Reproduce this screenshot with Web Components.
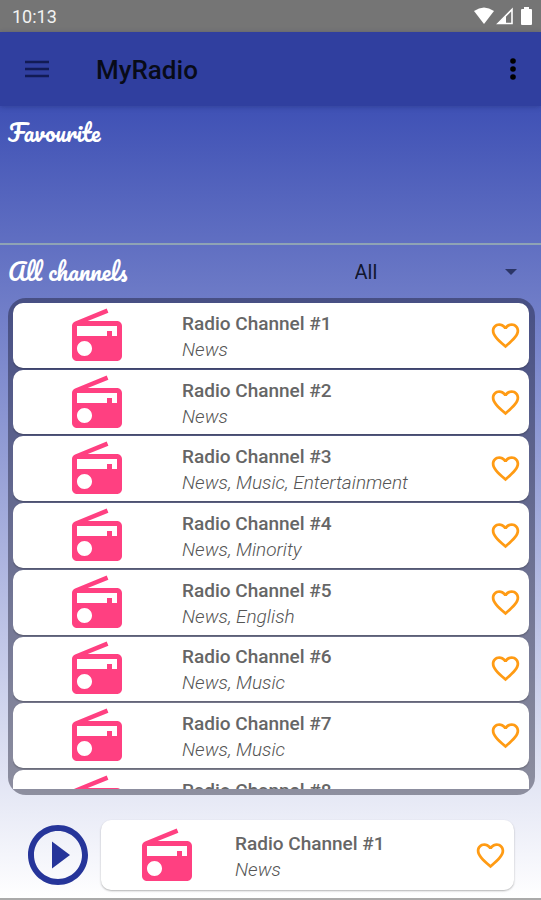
<!DOCTYPE html>
<html lang="en">
<head>
<meta charset="utf-8">
<meta name="viewport" content="width=device-width, initial-scale=1">
<title>MyRadio</title>
<style>
  html, body { margin: 0; height: 100%; }
  body { font-family: Roboto, "Liberation Sans", sans-serif; }
</style>
</head>
<body>
<radio-app></radio-app>
<script>
const define = (name, markup, setup) => {
  const template = document.createElement("template");
  template.innerHTML = markup;
  customElements.define(name, class extends HTMLElement {
    constructor() {
      super();
      this.attachShadow({ mode: "open" }).append(template.content.cloneNode(true));
    }
    connectedCallback() { if (setup) setup(this, this.shadowRoot); }
  });
};

define("status-bar", `
  <style>
    :host { display: flex; align-items: center; justify-content: space-between;
      height: 32px; padding: 0 9px 0 12px; box-sizing: border-box;
      background: #757575; color: #f2f2f2; font-size: 18px; line-height: 32px; }
    time { padding-top: 2px; }
    .icons { display: flex; align-items: center; gap: 2px; }
    svg { display: block; }
    .battery { margin-left: 6px; }
  </style>
  <time>10:13</time>
  <span class="icons">
    <svg width="20" height="18" viewBox="0 0 20 18" fill="#fff"><path d="M0 4Q10-3 20 4L10 17z"/></svg>
    <svg width="17" height="18" viewBox="0 0 17 18"><path d="M2 16.500 16 2.500V16.500z" fill="none" stroke="#fff" stroke-width="1.600"/><path d="M2 17 10 9V17z" fill="#fff"/><path d="M10 10.500 13 7.500V14H10z" fill="#757575"/></svg>
    <svg class="battery" width="11" height="18" viewBox="0 0 11 18" fill="#fff"><path d="M3 0h5v2h2q1 0 1 1v14q0 1-1 1H1q-1 0-1-1V3q0-1 1-1h2z"/></svg>
  </span>`);

define("app-header", `
  <style>
    :host { display: flex; align-items: center; height: 74px; padding: 0 16px 0 24px;
      box-sizing: border-box; background: #303f9f; color: #080b18;
      box-shadow: 0 1px 5px rgba(20,30,90,.3); position: relative; }
    h1 { flex: 1; margin: 0 0 0 46px; padding-top: 2px; font-size: 26px; line-height: 32px; font-weight: 500; }
    button { border: 0; padding: 0; background: none; color: inherit; }
    svg { display: block; }
  </style>
  <button aria-label="Open menu"><svg width="26" height="20" viewBox="0 0 26 20" stroke="#121b55" stroke-width="2.400"><path d="M1 3h24M1 10h24M1 17h24"/></svg></button>
  <h1><slot></slot></h1>
  <button aria-label="More options"><svg width="24" height="24" viewBox="0 0 24 24"><circle cx="12" cy="4" r="2.800"/><circle cx="12" cy="12" r="2.800"/><circle cx="12" cy="20" r="2.800"/></svg></button>`);

define("section-title", `
  <style>
    :host { display: block; color: #fff; }
    h2 { margin: 0; padding-bottom: 2px; font: 400 23px/32px Pacifico, "Liberation Serif", serif; white-space: nowrap; }
  </style>
  <h2><slot></slot></h2>`);

define("channel-filter", `
  <style>
    :host { display: block; position: relative; }
    select { appearance: none; width: 100%; border: 0; background: none; color: #11162e;
      font: 20px/32px Roboto, "Liberation Sans", sans-serif; padding: 0 40px 0 92px; height: 32px; }
    svg { position: absolute; right: 0; top: 13px; pointer-events: none; }
  </style>
  <select aria-label="Category"><option>All</option><option>News</option><option>Music</option></select>
  <svg width="12" height="6" viewBox="0 0 12 6" fill="#2b3566"><path d="M0 0h12L6 6z"/></svg>`);

define("channel-card", `
  <style>
    :host { display: grid; grid-template-columns: 167px 1fr 48px; column-gap: 2px; align-items: center;
      min-height: 64px; box-sizing: border-box; background: #fff; border-radius: 10px;
      box-shadow: 0 1px 2px rgba(0,0,0,.3); color: #666; overflow: hidden; }
    :host([compact]) { grid-template-columns: 132px 1fr 48px; height: 70px; }
    .text { padding-top: 3px; }
    .radio { display: block; justify-self: center; padding-top: 1px; }
    h3, p { margin: 0; min-height: 26px; line-height: 26px; font-size: 19px; white-space: nowrap; }
    h3 { font-weight: 500; }
    p { font-style: italic; font-weight: 300; color: #555; }
    button { border: 0; padding: 0; background: none; justify-self: center; }
    button svg { display: block; }
  </style>
  <svg class="radio" width="60" height="60" viewBox="0 0 24 24" fill="#ff4081"><path d="M3.240 6.150C2.510 6.430 2 7.170 2 8v12c0 1.100.890 2 2 2h16c1.110 0 2-.900 2-2V8c0-1.110-.890-2-2-2H8.300l8.260-3.340L15.880 1zM7 20c-1.660 0-3-1.340-3-3s1.340-3 3-3 3 1.340 3 3-1.340 3-3 3zm13-8h-2v-2h-2v2H4V8h16z"/></svg>
  <div class="text"><h3></h3><p></p></div>
  <button aria-label="Add to favourites"><svg width="33" height="33" viewBox="0 0 24 24" fill="#ff9b14"><path d="M16.500 3c-1.740 0-3.410.810-4.500 2.090C10.910 3.810 9.240 3 7.500 3 4.420 3 2 5.420 2 8.500c0 3.780 3.400 6.860 8.550 11.540L12 21.350l1.450-1.320C18.600 15.360 22 12.280 22 8.500 22 5.420 19.580 3 16.500 3zm-4.400 15.550-.100.100-.100-.100C7.140 14.240 4 11.390 4 8.500 4 6.500 5.500 5 7.500 5c1.540 0 3.040.990 3.570 2.360h1.870C13.460 5.990 14.960 5 16.500 5c2 0 3.500 1.500 3.500 3.500 0 2.890-3.140 5.740-7.900 10.050z"/></svg></button>`,
  (host, root) => {
    root.querySelector("h3").textContent = host.getAttribute("name");
    root.querySelector("p").textContent = host.getAttribute("genres");
  });

define("channel-list", `
  <style>
    :host { display: grid; flex: 1; min-height: 0; margin: 0 6px 0 8px; padding: 5px 6px 6px 5px;
      border-radius: 18px; background: rgba(18,20,40,.42); box-sizing: border-box; }
    .scroll { display: grid; grid-template-rows: repeat(7, minmax(64px, 1fr)) 19px;
      gap: 2px; min-height: 0; overflow: hidden; }
  </style>
  <div class="scroll"></div>`, (host, root) => {
  const genres = ["News", "News", "News, Music, Entertainment", "News, Minority", "News, English", "News, Music", "News, Music", ""];
  root.querySelector(".scroll").replaceChildren(...genres.map((genre, i) => {
    const card = document.createElement("channel-card");
    card.setAttribute("name", "Radio Channel #" + (i + 1));
    card.setAttribute("genres", genre);
    return card;
  }));
});

define("player-bar", `
  <style>
    :host { display: flex; align-items: center; gap: 7px; padding: 24px 27px 7px 22px;
      border-bottom: 2px solid #aaa; }
    button { border: 0; padding: 0; background: none; }
    svg { display: block; }
    channel-card { flex: 1; }
  </style>
  <button aria-label="Play"><svg width="72" height="72" viewBox="0 0 24 24" fill="#26359a"><path d="M10 16.500l6-4.500-6-4.500zM12 2C6.480 2 2 6.480 2 12s4.480 10 10 10 10-4.480 10-10S17.520 2 12 2zm0 18c-4.410 0-8-3.590-8-8s3.590-8 8-8 8 3.590 8 8-3.590 8-8 8z"/></svg></button>
  <channel-card compact name="Radio Channel #1" genres="News"></channel-card>`);

define("radio-app", `
  <style>
    :host { display: flex; flex-direction: column; height: 100vh; min-height: 640px; }
    main { flex: 1; min-height: 0; display: flex; flex-direction: column;
      background: linear-gradient(#3f51b5, #fff); }
    .favourites { height: 139px; padding: 10px 8px; box-sizing: border-box; border-bottom: 2px solid #8fa3b5; }
    .toolbar { display: grid; grid-template-columns: 1fr 1fr; align-items: center;
      height: 53px; padding: 0 24px 0 8px; box-sizing: border-box; }
  </style>
  <status-bar></status-bar>
  <app-header>MyRadio</app-header>
  <main>
    <section class="favourites"><section-title>Favourite</section-title></section>
    <div class="toolbar"><section-title>All channels</section-title><channel-filter></channel-filter></div>
    <channel-list></channel-list>
    <player-bar></player-bar>
  </main>`);
</script>
</body>
</html>
